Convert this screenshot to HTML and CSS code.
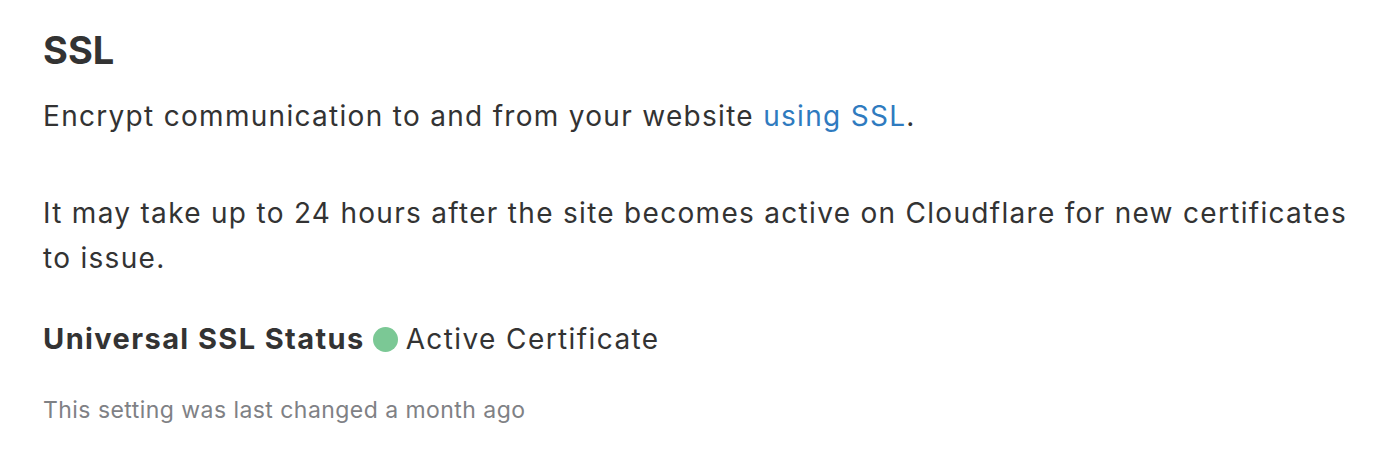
FILE: index.html
```html
<!DOCTYPE html>
<html>
<head>
<meta charset="utf-8">
<link rel="stylesheet" href="styles.css">
</head>
<body>
<section class="card">
  <h2 class="title">SSL</h2>
  <p class="desc desc-first">Encrypt communication to and from your website <a class="link" href="#">using SSL</a>.</p>
  <p class="desc desc-gap">It may take up to 24 hours after the site becomes active on Cloudflare for new certificates to issue.</p>
  <div class="status">
    <span class="status-label">Universal SSL Status</span>
    <span class="dot"></span>
    <span class="status-value">Active Certificate</span>
  </div>
  <p class="meta">This setting was last changed a month ago</p>
</section>
</body>
</html>
```

FILE: styles.css
```css
html, body {
  margin: 0;
  padding: 0;
  background: #ffffff;
}
body {
  font-family: Inter, "Noto Sans", "Liberation Sans", sans-serif;
  color: #333333;
}
.card {
  padding: 26px 0 0 43px;
  width: 1363px;
  box-sizing: border-box;
}
.title {
  margin: 0;
  font-size: 38px;
  font-weight: 700;
  line-height: 48px;
  color: #333333;
}
.desc {
  margin: 0;
  font-size: 28px;
  line-height: 45px;
  letter-spacing: 1.3px;
  color: #333333;
}
.desc-first {
  margin-top: 20px;
}
.desc-gap {
  margin-top: 52px;
}
.link {
  color: #2f7bbf;
  text-decoration: none;
}
.status {
  display: flex;
  align-items: center;
  gap: 8px;
  margin-top: 38px;
  font-size: 28px;
  line-height: 40px;
  letter-spacing: 1.4px;
}
.status-label {
  font-weight: 700;
  font-size: 29px;
  letter-spacing: 1.4px;
}
.dot {
  width: 25px;
  height: 25px;
  border-radius: 50%;
  background: #7bc895;
  flex: none;
}
.meta {
  margin: 37px 0 0;
  font-size: 23px;
  line-height: 28px;
  letter-spacing: 0.45px;
  color: #7f8185;
}
```
